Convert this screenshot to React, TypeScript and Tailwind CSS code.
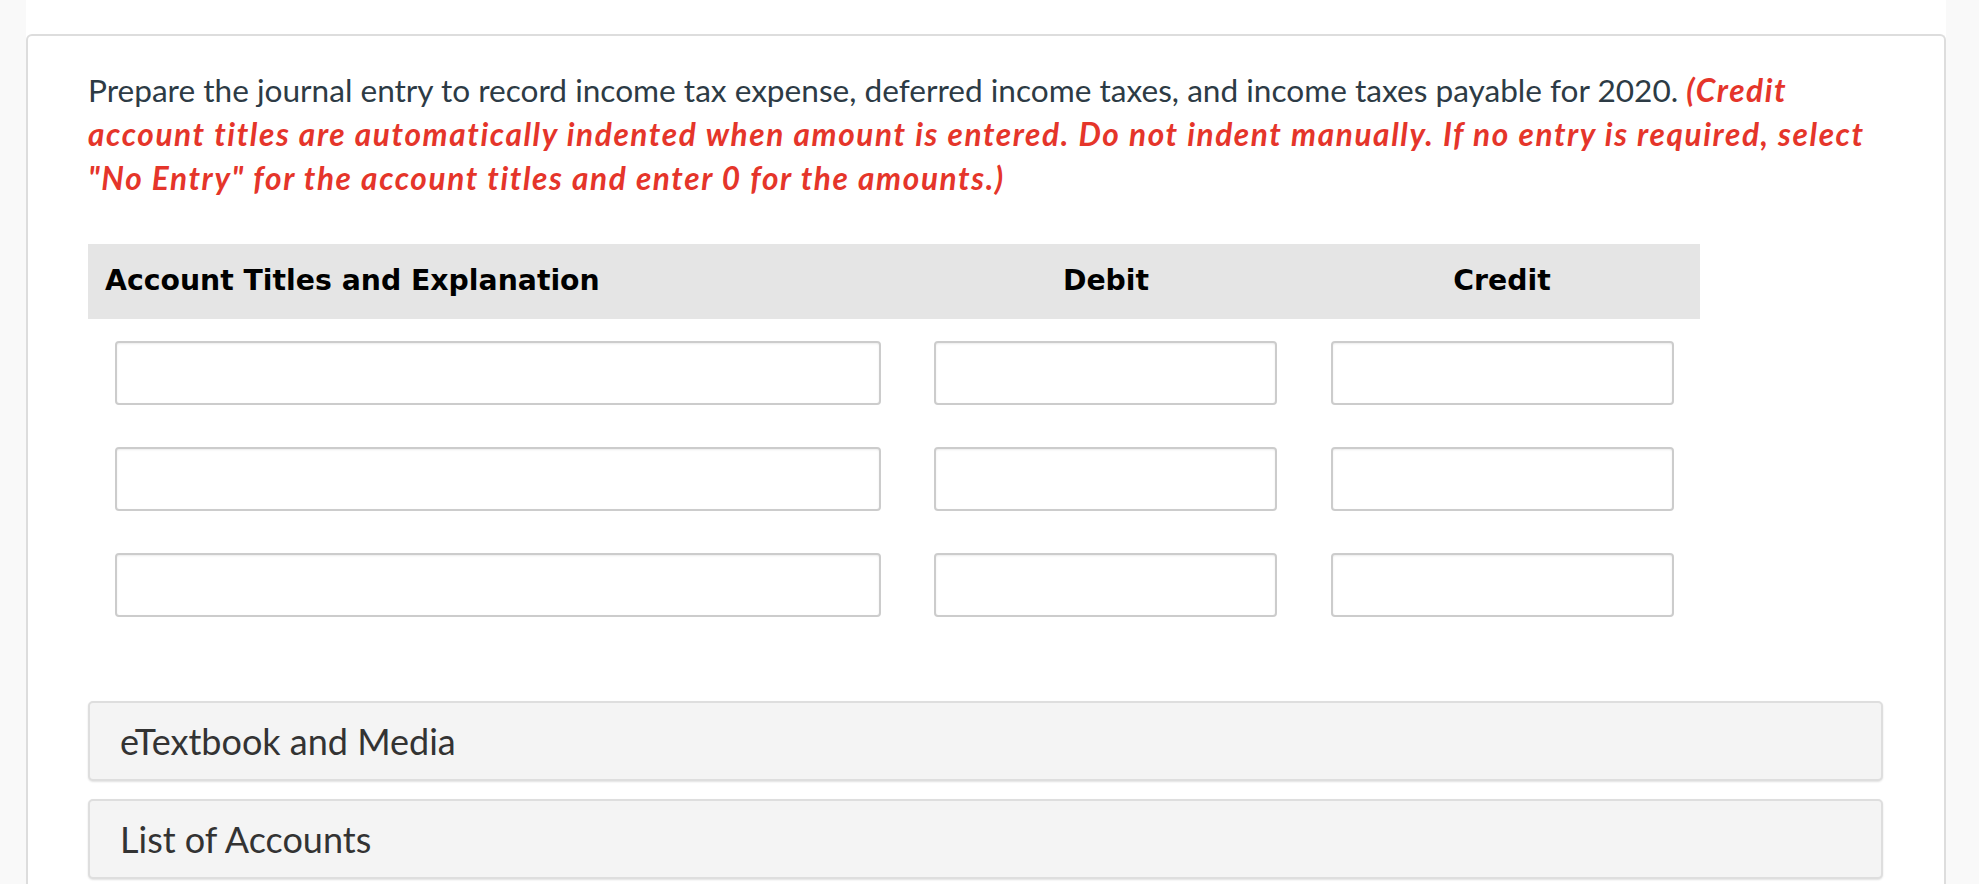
const rows = [0, 1, 2]

function JournalRow() {
  return (
    <div className="grid grid-cols-[820px_396px_396px]">
      <input className="ml-[27px] h-[64px] w-[766px] rounded-[4px] border-2 border-[#cccccc] bg-white shadow-[inset_0_1px_2px_rgba(0,0,0,0.08)] outline-none" />
      <input className="ml-[26px] h-[64px] w-[343px] rounded-[4px] border-2 border-[#cccccc] bg-white shadow-[inset_0_1px_2px_rgba(0,0,0,0.08)] outline-none" />
      <input className="ml-[27px] h-[64px] w-[343px] rounded-[4px] border-2 border-[#cccccc] bg-white shadow-[inset_0_1px_2px_rgba(0,0,0,0.08)] outline-none" />
    </div>
  )
}

function Panel({ label }: { label: string }) {
  return (
    <div className="flex h-[80px] w-[1795px] items-center rounded-[5px] border-2 border-[#dedede] bg-[#f4f4f4] pl-[30px] text-[36px] text-[#333333] shadow-[0_1px_2px_rgba(0,0,0,0.12)]">
      {label}
    </div>
  )
}

export default function App() {
  return (
    <div className="flex min-h-screen bg-[#f9f9f9] font-['Lato','Noto_Sans',sans-serif]">
      <main className="ml-[26px] w-[1920px] bg-white pt-[34px]">
        <section className="h-[900px] rounded-t-[6px] border-2 border-b-0 border-[#dddddd] px-[60px] pt-[32px]">
          {/* Question text */}
          <p className="text-[31.6px] leading-[44px] text-[#2d3b45]">
            Prepare the journal entry to record income tax expense, deferred income taxes, and income taxes payable for 2020.{' '}
            <span className="font-bold italic tracking-[1.6px] text-[#e5352a]">
              (Credit account titles are automatically indented when amount is entered. Do not indent manually. If no entry is required, select "No Entry" for the account titles and enter 0 for the amounts.)
            </span>
          </p>

          {/* Journal table */}
          <div className="mt-[44px] w-[1612px]">
            <div className="grid h-[75px] grid-cols-[820px_396px_396px] items-center bg-[#e5e5e5] font-['Verdana','DejaVu_Sans',sans-serif] text-[28.3px] font-bold text-black">
              <div className="pl-[17px]">Account Titles and Explanation</div>
              <div className="text-center">Debit</div>
              <div className="text-center">Credit</div>
            </div>
            <div className="flex flex-col gap-[42px] pt-[22px]">
              {rows.map(r => (
                <JournalRow key={r} />
              ))}
            </div>
          </div>

          <div className="mt-[84px] flex flex-col gap-[18px]">
            <Panel label="eTextbook and Media" />
            <Panel label="List of Accounts" />
          </div>
        </section>
      </main>
    </div>
  )
}
